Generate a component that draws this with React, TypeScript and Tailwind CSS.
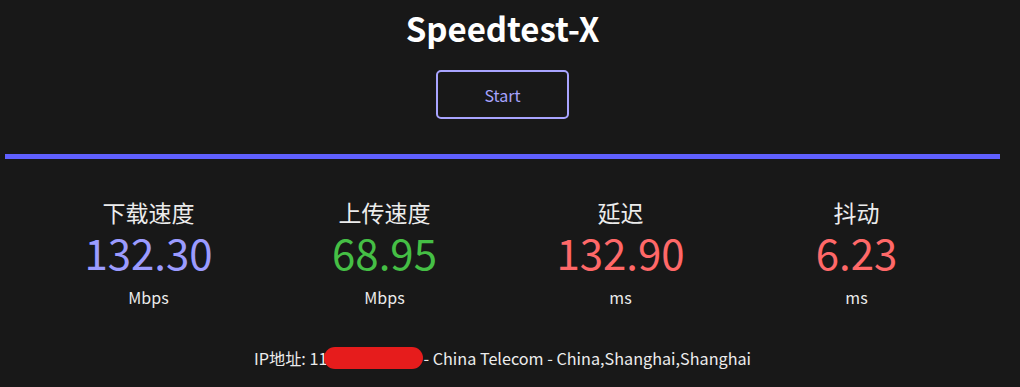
const stats = [
  { label: "下载速度", value: "132.30", unit: "Mbps", color: "text-[#9b9bff]" },
  { label: "上传速度", value: "68.95", unit: "Mbps", color: "text-[#45bf45]" },
  { label: "延迟", value: "132.90", unit: "ms", color: "text-[#ff6868]" },
  { label: "抖动", value: "6.23", unit: "ms", color: "text-[#ff6868]" },
]

export default function App() {
  return (
    <div
      className="w-[1020px] h-[387px] bg-[#181818] text-[#ececec] overflow-hidden"
      style={{ fontFamily: '"Noto Sans CJK SC", "Noto Sans", sans-serif' }}
    >
      <div className="w-[1005px] flex flex-col items-center">
        <h1 className="text-[33px] font-bold leading-[56px] text-white">Speedtest-X</h1>
        <button className="mt-[14px] w-[133px] h-[49px] border-2 border-[#a8a4ff] rounded-[5px] text-[16px] text-[#a8a4ff]">
          Start
        </button>
        <div className="mt-[35px] h-[5px] w-[995px] bg-[#6060ff]"></div>

        <div className="mt-[43px] w-[944px] grid grid-cols-4">
          {stats.map((s) => (
            <div key={s.label} className="flex flex-col items-center">
              <div className="text-[23px] leading-[20px]">{s.label}</div>
              <div className={`text-[42px] leading-[60px] ${s.color}`}>{s.value}</div>
              <div className="mt-[4px] text-[16px] leading-[22px]">{s.unit}</div>
            </div>
          ))}
        </div>

        <div className="mt-[39px] text-[16.2px] leading-[22px] flex items-center">
          <span>IP地址: 11</span>
          <span className="inline-block -ml-[3px] w-[99px] h-[22px] rounded-full bg-[#e61c1c]"></span>
          <span>- China Telecom - China,Shanghai,Shanghai</span>
        </div>
      </div>
    </div>
  )
}
